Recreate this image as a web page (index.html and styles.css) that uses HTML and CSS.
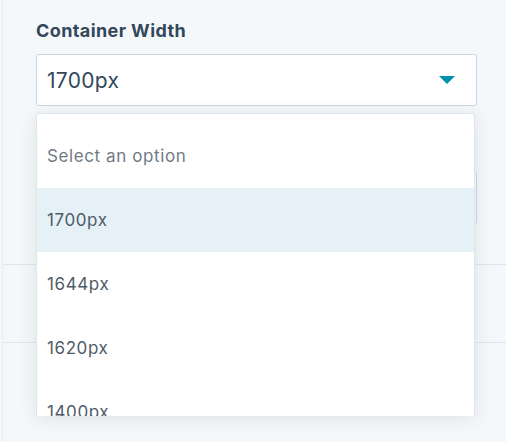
FILE: index.html
```html
<!DOCTYPE html>
<html>
<head>
<meta charset="utf-8">
<link rel="stylesheet" href="styles.css">
</head>
<body>
<div class="page">
  <div class="content">
    <div class="field">
      <div class="label">Container Width</div>
      <div class="select">
        <span class="value">1700px</span>
        <svg class="caret" width="16" height="8" viewBox="0 0 16 8"><path d="M0 0 H16 L8 8 Z" fill="#0091ae"/></svg>
      </div>
    </div>
    <div class="field field-second">
      <div class="select select-second"></div>
    </div>
  </div>
  <div class="divider divider-first"></div>
  <div class="divider divider-second"></div>

  <div class="menu">
    <div class="option placeholder">Select an option</div>
    <div class="option active">1700px</div>
    <div class="option">1644px</div>
    <div class="option">1620px</div>
    <div class="option">1400px</div>
  </div>
</div>
</body>
</html>
```

FILE: styles.css
```css
html, body {
  margin: 0;
  padding: 0;
}
body {
  background: #f5f8fa;
  font-family: Inter, "Noto Sans", sans-serif;
  color: #33475b;
  width: 506px;
  height: 442px;
  overflow: hidden;
}
.page {
  position: relative;
  height: 442px;
  border-left: 1px solid #e9edf1;
  margin-left: 2px;
}
.content {
  padding: 19px 29px 0 33px;
}
.label {
  font-size: 18px;
  font-weight: 700;
  letter-spacing: 0.4px;
  line-height: 24px;
  margin-bottom: 11px;
  color: #33475b;
}
.select {
  height: 50px;
  border: 1px solid #cbd6e2;
  border-radius: 3px;
  background: #fff;
  display: flex;
  align-items: center;
  justify-content: space-between;
  padding: 0 21px 0 10px;
}
.value {
  font-size: 21px;
  letter-spacing: 0.3px;
  color: #33475b;
}
.field-second {
  margin-top: 65px;
}
.select-second {
  height: 52px;
}
.divider {
  height: 1px;
  background: #dfe3eb;
}
.divider-first {
  margin-top: 39px;
}
.divider-second {
  margin-top: 77px;
}
.menu {
  position: absolute;
  top: 113px;
  left: 33px;
  width: 439px;
  height: 303px;
  box-sizing: border-box;
  background: #fff;
  border: 1px solid #dfe3eb;
  border-bottom: none;
  border-radius: 3px 3px 0 0;
  box-shadow: 0 2px 18px rgba(45, 62, 80, 0.12);
  padding-top: 10px;
  overflow: hidden;
}
.option {
  height: 64px;
  display: flex;
  align-items: center;
  padding-left: 10px;
  font-size: 17px;
  letter-spacing: 0.6px;
  color: #4f5b67;
}
.option.placeholder {
  color: #6f7a85;
}
.option.active {
  background: #e5f1f7;
}
```
